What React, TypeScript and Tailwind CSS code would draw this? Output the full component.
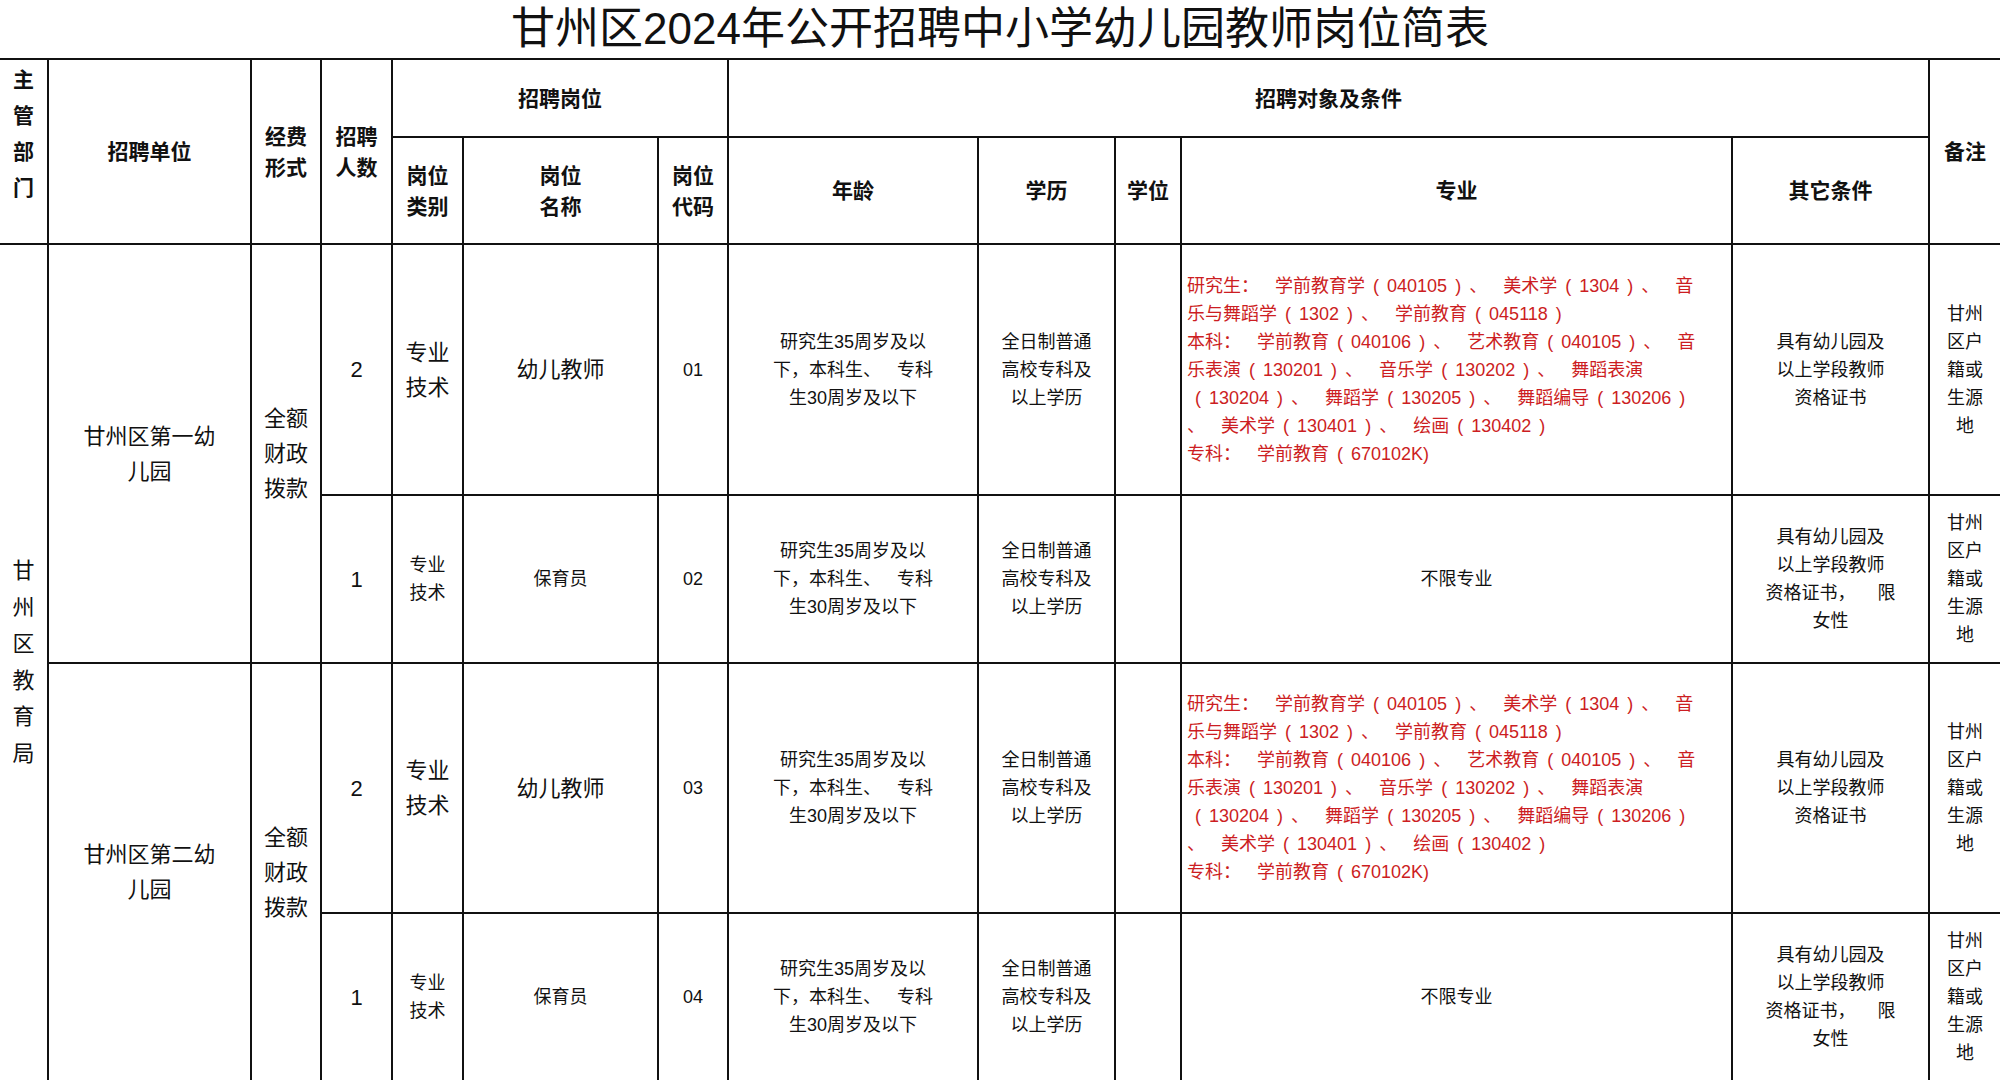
import React from "react";

const B = "border-2 border-[#111]";
const th = `${B} font-bold text-[21px] leading-[31px] text-center align-middle p-0`;
const td = `${B} text-center align-middle p-0 font-normal`;
const big = "text-[22px] leading-[35px]";
const sm = "text-[18px] leading-[28px]";

function Lines({ lines }: { lines: React.ReactNode[] }) {
  return (
    <>
      {lines.map((l, i) => (
        <div key={i} className="whitespace-pre [word-spacing:11px]">
          {l}
        </div>
      ))}
    </>
  );
}

function Paren({ s }: { s: string }) {
  const parts: React.ReactNode[] = [];
  let buf = "";
  let k = 0;
  for (const ch of s) {
    if (ch === "（" || ch === "）") {
      if (buf) {
        parts.push(<React.Fragment key={k++}>{buf}</React.Fragment>);
        buf = "";
      }
      parts.push(
        <span key={k++} className="inline-block w-[22px] text-center">
          {ch === "（" ? "(" : ")"}
        </span>
      );
    } else buf += ch;
  }
  if (buf) parts.push(<React.Fragment key={k++}>{buf}</React.Fragment>);
  return <>{parts}</>;
}

const ageLines = ["研究生35周岁及以", "下，本科生、 专科", "生30周岁及以下"];
const eduLines = ["全日制普通", "高校专科及", "以上学历"];
const otherA = ["具有幼儿园及", "以上学段教师", "资格证书"];
const otherB: React.ReactNode[] = [
  "具有幼儿园及",
  "以上学段教师",
  <>
    资格证书，<span className="ml-[22px]">限</span>
  </>,
  "女性",
];
const note = ["甘州", "区户", "籍或", "生源", "地"];
const majorLines = [
  "研究生： 学前教育学（040105）、 美术学（1304）、 音",
  "乐与舞蹈学（1302）、 学前教育（045118）",
  "本科： 学前教育（040106）、 艺术教育（040105）、 音",
  "乐表演（130201）、 音乐学（130202）、 舞蹈表演",
  "（130204）、 舞蹈学（130205）、 舞蹈编导（130206）",
  "、 美术学（130401）、 绘画（130402）",
  "专科： 学前教育（670102K)",
].map((s, i) => <Paren key={i} s={s} />);

function TeacherRow({
  first,
  unit,
  code,
}: {
  first: boolean;
  unit: string;
  code: string;
}) {
  return (
    <tr className={first ? "h-[251px]" : "h-[250px]"}>
      {first && (
        <td rowSpan={4} className={`${td} border-l-0 text-[22px] leading-[36.5px]`}>
          <Lines lines={["甘", "州", "区", "教", "育", "局"]} />
        </td>
      )}
      <td rowSpan={2} className={`${td} ${big}`}>
        <Lines lines={[unit, "儿园"]} />
      </td>
      <td rowSpan={2} className={`${td} ${big}`}>
        <Lines lines={["全额", "财政", "拨款"]} />
      </td>
      <td className={`${td} ${big}`}>2</td>
      <td className={`${td} ${big}`}>
        <Lines lines={["专业", "技术"]} />
      </td>
      <td className={`${td} ${big}`}>幼儿教师</td>
      <td className={`${td} ${sm}`}>{code}</td>
      <td className={`${td} ${sm}`}>
        <Lines lines={ageLines} />
      </td>
      <td className={`${td} ${sm}`}>
        <Lines lines={eduLines} />
      </td>
      <td className={td}></td>
      <td className={`${td} ${sm} text-left pl-[5px] text-[#cc1d22] leading-[27.7px]`}>
        <Lines lines={majorLines} />
      </td>
      <td className={`${td} ${sm}`}>
        <Lines lines={otherA} />
      </td>
      <td className={`${td} ${sm} border-r-0`}>
        <Lines lines={note} />
      </td>
    </tr>
  );
}

function NurseRow({ code }: { code: string }) {
  return (
    <tr className="h-[168px]">
      <td className={`${td} ${big}`}>1</td>
      <td className={`${td} ${sm}`}>
        <Lines lines={["专业", "技术"]} />
      </td>
      <td className={`${td} ${sm}`}>保育员</td>
      <td className={`${td} ${sm}`}>{code}</td>
      <td className={`${td} ${sm}`}>
        <Lines lines={ageLines} />
      </td>
      <td className={`${td} ${sm}`}>
        <Lines lines={eduLines} />
      </td>
      <td className={td}></td>
      <td className={`${td} ${sm}`}>不限专业</td>
      <td className={`${td} ${sm}`}>
        <Lines lines={otherB} />
      </td>
      <td className={`${td} ${sm} border-r-0`}>
        <Lines lines={note} />
      </td>
    </tr>
  );
}

export default function App() {
  return (
    <div className="w-[2000px] h-[1080px] overflow-hidden bg-white text-[#111] font-['Liberation_Sans','Noto_Sans_CJK_SC',sans-serif]">
      <div className="h-[58px] flex items-center justify-center text-[44px] leading-none">
        甘州区2024年公开招聘中小学幼儿园教师岗位简表
      </div>
      <table className="w-[2000px] table-fixed border-collapse">
        <colgroup>
          <col className="w-[48px]" />
          <col className="w-[203px]" />
          <col className="w-[70px]" />
          <col className="w-[71px]" />
          <col className="w-[71px]" />
          <col className="w-[195px]" />
          <col className="w-[70px]" />
          <col className="w-[250px]" />
          <col className="w-[137px]" />
          <col className="w-[66px]" />
          <col className="w-[551px]" />
          <col className="w-[197px]" />
          <col className="w-[71px]" />
        </colgroup>
        <thead>
          <tr className="h-[78px]">
            <th rowSpan={2} className={`${th} border-l-0 leading-[36px] pb-[35px]`}>
              <Lines lines={["主", "管", "部", "门"]} />
            </th>
            <th rowSpan={2} className={th}>
              招聘单位
            </th>
            <th rowSpan={2} className={th}>
              <Lines lines={["经费", "形式"]} />
            </th>
            <th rowSpan={2} className={th}>
              <Lines lines={["招聘", "人数"]} />
            </th>
            <th colSpan={3} className={th}>
              招聘岗位
            </th>
            <th colSpan={5} className={th}>
              招聘对象及条件
            </th>
            <th rowSpan={2} className={`${th} border-r-0`}>
              备注
            </th>
          </tr>
          <tr className="h-[107px]">
            <th className={th}>
              <Lines lines={["岗位", "类别"]} />
            </th>
            <th className={th}>
              <Lines lines={["岗位", "名称"]} />
            </th>
            <th className={th}>
              <Lines lines={["岗位", "代码"]} />
            </th>
            <th className={th}>年龄</th>
            <th className={th}>学历</th>
            <th className={th}>学位</th>
            <th className={th}>专业</th>
            <th className={th}>其它条件</th>
          </tr>
        </thead>
        <tbody>
          <TeacherRow first unit="甘州区第一幼" code="01" />
          <NurseRow code="02" />
          <TeacherRow first={false} unit="甘州区第二幼" code="03" />
          <NurseRow code="04" />
        </tbody>
      </table>
    </div>
  );
}
